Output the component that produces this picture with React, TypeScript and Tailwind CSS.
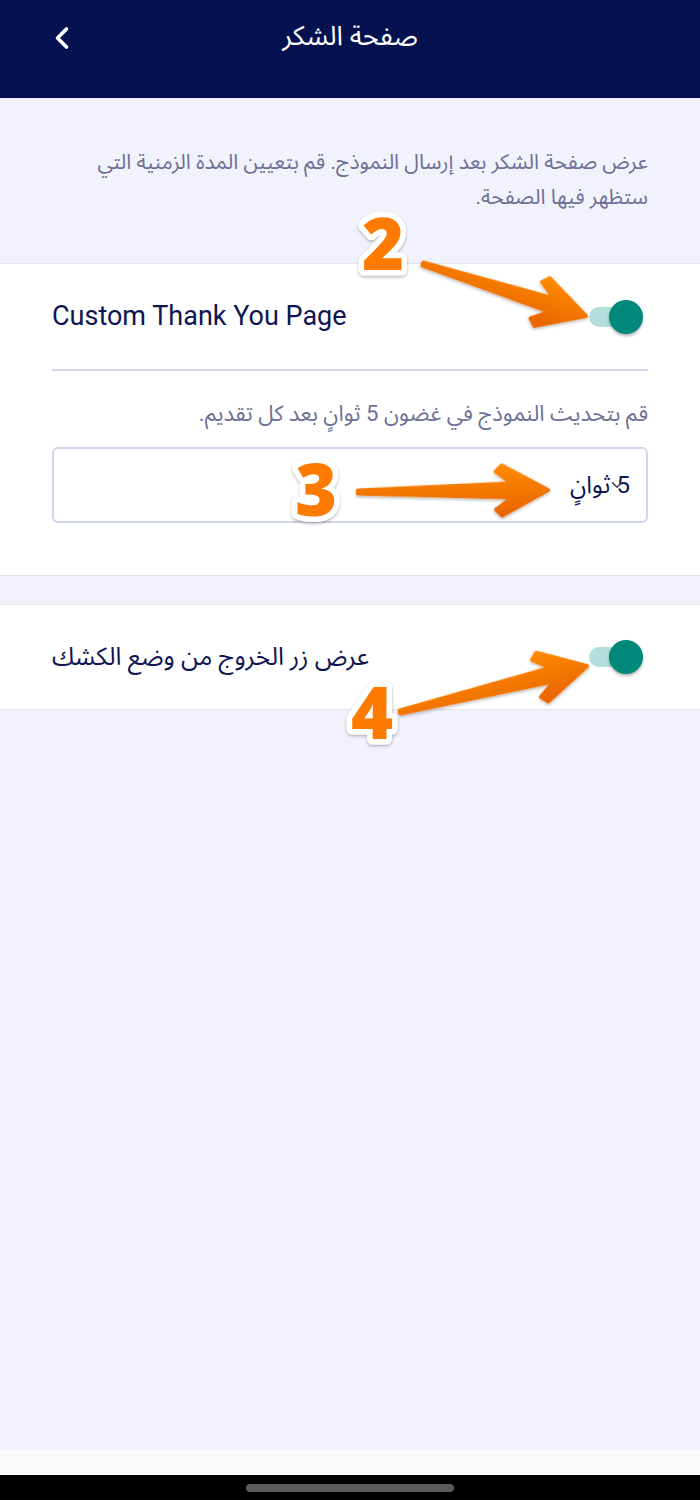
import { ChevronLeft, ChevronDown } from "lucide-react";

type ArrowProps = {
  from: [number, number];
  to: [number, number];
};

// chunky orange callout arrow, drawn along the x axis then rotated into place
function Arrow({ from, to }: ArrowProps) {
  const dx = to[0] - from[0];
  const dy = to[1] - from[1];
  const L = Math.sqrt(dx * dx + dy * dy);
  const angle = (Math.atan2(dy, dx) * 180) / Math.PI;
  const pts = [
    [0, -1.5],
    [L - 36, -7],
    [L - 52, -19],
    [L - 46, -25],
    [L, 0],
    [L - 46, 25],
    [L - 52, 19],
    [L - 36, 7],
    [0, 1.5],
  ]
    .map((p) => p.join(","))
    .join(" ");
  return (
    <g transform={`translate(${from[0]},${from[1]}) rotate(${angle})`}>
      <polygon
        points={pts}
        fill="url(#arrowFill)"
        stroke="url(#arrowFill)"
        strokeWidth={4}
        strokeLinejoin="round"
        filter="url(#soft)"
      />
    </g>
  );
}

function Badge({ x, y, n }: { x: number; y: number; n: string }) {
  return (
    <text
      x={x}
      y={y}
      textAnchor="middle"
      fontFamily="'Open Sans', sans-serif"
      fontWeight={800}
      fontSize={72}
      fill="#ff7a00"
      stroke="#ffffff"
      strokeWidth={11}
      strokeLinejoin="round"
      paintOrder="stroke"
      filter="url(#soft)"
    >
      {n}
    </text>
  );
}

function Toggle() {
  return (
    <div className="relative w-[54px] h-[34px] flex items-center">
      <div className="w-[42px] h-[20px] rounded-full bg-[#b2dfdb]" />
      <div className="absolute right-0 top-0 w-[34px] h-[34px] rounded-full bg-[#00897b] shadow-[0_2px_3px_rgba(0,0,0,0.3)]" />
    </div>
  );
}

export default function App() {
  const arabic = "font-['Roboto','Noto_Sans_Arabic','DejaVu_Sans',sans-serif]";

  return (
    <div className={`relative w-[700px] h-[1500px] flex flex-col bg-[#f2f2fd] ${arabic}`}>
      {/* top bar */}
      <div className="h-[98px] bg-[#061250] flex items-start px-[44px] pt-[20px] relative">
        <ChevronLeft className="text-white" size={36} strokeWidth={2.4} />
        <div className="absolute left-0 right-0 top-[16px] text-center text-white text-[27px]" dir="rtl">
          صفحة الشكر
        </div>
      </div>

      <div className="flex-1 flex flex-col">
        <p
          dir="rtl"
          className="px-[52px] pt-[47px] pb-[48px] text-[21px] leading-[35px] text-[#6d7097]"
        >
          عرض صفحة الشكر بعد إرسال النموذج. قم بتعيين المدة الزمنية التي ستظهر فيها الصفحة.
        </p>

        {/* thank you page card */}
        <div className="bg-white border-y border-[#e4e4ee]">
          <div className="h-[105px] px-[52px] flex items-center justify-between">
            <span className="text-[27px] font-normal text-[#0e1552] font-['Roboto',sans-serif]">
              Custom Thank You Page
            </span>
            <div className="mr-[5px]">
              <Toggle />
            </div>
          </div>
          <div className="mx-[52px] h-[2px] bg-[#d3d8f0]" />
          <p dir="rtl" className="px-[52px] pt-[26px] text-[22px] leading-[34px] text-[#6d7097]">
            قم بتحديث النموذج في غضون 5 ثوانٍ بعد كل تقديم.
          </p>
          <div className="mx-[52px] mt-[16px] mb-[52px] h-[76px] rounded-[6px] border-2 border-[#d0d5ee] flex items-center justify-end px-[16px] relative">
            <span dir="rtl" className="text-[24px] text-[#0e1552]">
              5 ثوانٍ
            </span>
            <ChevronDown
              className="absolute right-[20px] top-[27px] text-[#3a3f5c]"
              size={18}
              strokeWidth={2}
            />
          </div>
        </div>

        <div className="h-[28px]" />

        {/* kiosk exit card */}
        <div className="bg-white border-y border-[#e4e4ee] h-[106px] px-[52px] flex items-center justify-between">
          <span dir="rtl" className="text-[25px] text-[#0e1552]">
            عرض زر الخروج من وضع الكشك
          </span>
          <div className="mr-[5px]">
            <Toggle />
          </div>
        </div>
      </div>

      {/* system navigation */}
      <div className="h-[25px] bg-[#fafafa]" />
      <div className="h-[25px] bg-black flex justify-center pt-[9px]">
        <div className="w-[208px] h-[8px] rounded-full bg-[#5c5c5c]" />
      </div>

      {/* step callouts */}
      <svg
        className="absolute inset-0 pointer-events-none"
        width={700}
        height={1500}
        viewBox="0 0 700 1500"
      >
        <defs>
          <linearGradient id="arrowFill" x1="0" y1="0" x2="0" y2="1">
            <stop offset="0" stopColor="#ff8a00" />
            <stop offset="1" stopColor="#e86300" />
          </linearGradient>
          <filter id="soft" x="-20%" y="-20%" width="140%" height="140%">
            <feDropShadow dx="0" dy="1.5" stdDeviation="1.5" floodColor="#000" floodOpacity="0.3" />
          </filter>
        </defs>
        <Arrow from={[423, 264]} to={[586, 316]} />
        <Arrow from={[358, 492]} to={[548, 490]} />
        <Arrow from={[400, 712]} to={[587, 666]} />
        <Badge x={383} y={270} n="2" />
        <Badge x={316} y={516} n="3" />
        <Badge x={372} y={739} n="4" />
      </svg>
    </div>
  );
}
